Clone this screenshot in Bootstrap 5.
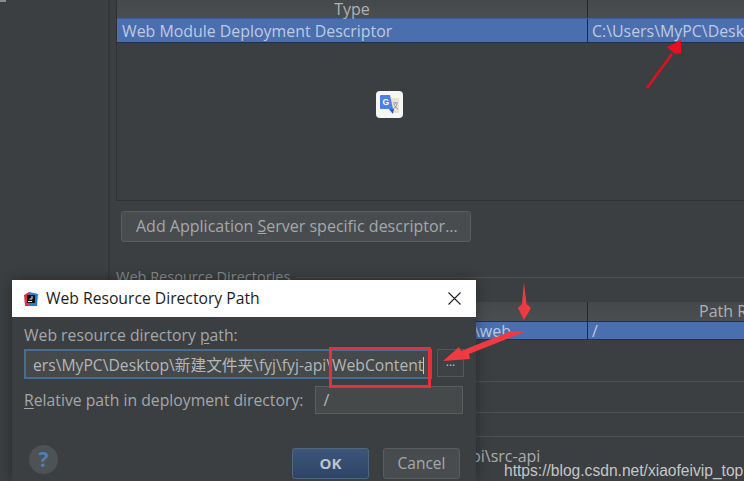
<!DOCTYPE html>
<html lang="zh"><head><meta charset="utf-8">
<link rel="stylesheet" href="https://cdn.jsdelivr.net/npm/bootstrap@5.3.0/dist/css/bootstrap.min.css">
<style>
html,body{margin:0;height:481px;overflow:hidden;background:#3c3f41}
body{font-family:"Open Sans","Noto Sans CJK SC",sans-serif;font-size:16px;color:#a9adb0;line-height:1.2}
.stage{width:744px;height:481px;overflow:hidden;background:#3c3f41}
.side{width:110px;flex:none;border-right:2px solid #35383a;background:#3c3f41}
.main{width:634px;flex:none;padding-left:6px}
.tbl-wrap{height:201px;border:1px solid #2f3133;border-top:0;border-right:0}
.thead{height:18px;background:linear-gradient(#46494b,#4b4e50);color:#aeb1b3}
.thead>div{text-align:center;line-height:18px}
.c1{width:471px;flex:none;border-right:1px solid #26282a}
.c2{flex:1;white-space:nowrap;overflow:hidden}
.trow{height:25px;background:#4b6eaf;border-top:1px solid #3e5f99;border-bottom:1px solid #1f3150;color:#bccbe2;line-height:24px;white-space:nowrap;font-size:15.900px}
.trow .c1{padding-left:5px}
.trow .c2{padding-left:4px}
.addbtn{margin:10px 0 0 5px;width:350px;height:31px;background:#494c4f;border:1px solid #5a5d5f;border-radius:3px;color:#a4a8aa;line-height:29px;padding-left:14px;white-space:nowrap}
.gtitle{margin-top:27px;height:33px;display:flex;gap:6px;font-size:14.500px;color:#85898b;line-height:15px}
.gtitle i{flex:1;border-top:1px solid #4d5052;margin-top:8px}
.thead2{height:19px;background:linear-gradient(#46494b,#4b4e50);color:#aeb1b3;line-height:19px}
.thead2 .c1,.trow2 .c1{width:472px}
.thead2 .c2{padding-left:111px}
.trow2{height:19px;background:#4b6eaf;border-top:1px solid #1f3150;border-bottom:1px solid #1f3150;color:#bccbe2;line-height:19px;white-space:nowrap}
.trow2 .c1{padding-left:358px}
.trow2 .c2{padding-left:4px}
.sep{height:1px;background:#4d5052}
.sep-a{margin-top:41px}
.sep-b{margin-top:30px}
.sep-c{margin-top:23px}
.srctext{padding-left:355px;margin-top:10px;color:#a9adb0;white-space:nowrap}

.dlg{position:absolute;left:12px;top:280px;width:464px;height:201px;background:#3c3f41;box-shadow:0 0 12px rgba(0,0,0,.35)}
.dlg-title{height:37px;background:#fff;color:#1c1c1c;font-size:15.700px;padding-left:11px}
.dlg-title .ticon{margin-right:7px}
.dlg-x{margin-left:auto;margin-right:15px}
.dlg-body{padding:9px 12px 0}
.lbl{color:#a3a7a9;font-size:15.750px;line-height:19px}
.lbl u{text-underline-offset:2px}
.path-in{width:408px;height:30px;border:2px solid #466d94;background:#45494a;color:#b3b6b8;line-height:28px;padding-left:7px;overflow:hidden;white-space:nowrap;font-size:15.700px;flex:none}
.caret-bar{display:inline-block;width:1px;height:17px;background:#c8c8c8;vertical-align:-3px}
.dots{width:27px;height:28px;border:1px solid #55585a;background:#3f4244;color:#c0c3c5;line-height:24px;text-align:center;margin-left:5px;flex:none;font-size:12px;letter-spacing:0}
.rel-row{margin-top:7px}
.rel-in{width:148px;height:28px;border:1px solid #5b5e60;background:#45494a;color:#b3b6b8;line-height:26px;padding-left:7px;margin-left:12px}
.foot{margin-top:31px;margin-left:5px}
.helpc{width:29px;height:29px;border-radius:50%;background:#4d5254;color:#4f80b5;font-weight:700;font-size:21px;line-height:29px;text-align:center}
.btns{margin-top:3px;margin-right:4px;gap:14px}
.okb,.cancelb{height:31px;width:77px;border-radius:3px;text-align:center;line-height:29px}
.okb{background:linear-gradient(#3c5579,#2d4466);border:1px solid #51677f;color:#bcc4cc;font-weight:700;font-size:15px}
.cancelb{background:#494c4f;border:1px solid #5a5d5f;color:#a4a8aa;font-size:15.500px}
.overlay{position:absolute;left:0;top:0;pointer-events:none}
.redbox{position:absolute;left:329px;top:347px;width:102px;height:41px;border:3px solid #e8303c}
.gicon{position:absolute;left:376px;top:91px;width:27px;height:27px;background:#f6f6f4;border-radius:4px}
.wm{position:absolute;left:504px;top:461px;font-family:"Liberation Sans",sans-serif;font-size:15.600px;color:#c4c6c8;white-space:nowrap;line-height:20px}
.ticon{flex:none}
</style></head><body>
<div class="stage d-flex position-relative">
  <div class="side"></div>
  <div class="main">
    <div class="tbl-wrap">
      <div class="thead d-flex"><div class="c1">Type</div><div class="c2"></div></div>
      <div class="trow d-flex"><div class="c1">Web Module Deployment Descriptor</div><div class="c2">C:\Users\MyPC\Desktop</div></div>
    </div>
    <div class="addbtn">Add Application <u>S</u>erver specific descriptor...</div>
    <div class="gtitle"><span>Web Resource Directories</span><i></i></div>
    <div class="thead2 d-flex"><div class="c1"></div><div class="c2">Path R</div></div>
    <div class="trow2 d-flex"><div class="c1">\web</div><div class="c2">/</div></div>
    <div class="sep sep-a"></div>
    <div class="sep sep-b"></div>
    <div class="sep sep-c"></div>
    <div class="srctext">pi\src-api</div>
  </div>

  <svg class="gicon" viewBox="0 0 27 27">
    <path d="M13 7h10v14a1 1 0 0 1-1 1h-8z" fill="#e8e2d6"/>
    <path d="M4 5a1 1 0 0 1 1-1h9l3 14H5a1 1 0 0 1-1-1z" fill="#4a80e8"/>
    <path d="M13 18h5l-1 5z" fill="#2e5cb8"/>
    <text x="6.500" y="14" font-family="Liberation Sans" font-size="8.500" font-weight="700" fill="#fff">G</text>
    <path d="M17 12h5M19.500 11v1M18 13c.5 2 2 4 4 5M21 13c-.5 2-2 4-4 5" stroke="#8a97a8" fill="none" stroke-width="1"/>
  </svg>

  <div class="dlg">
    <div class="dlg-title d-flex align-items-center">
      <svg width="16" height="16" viewBox="0 0 16 16" class="ticon">
        <path d="M1 4l5-3v14H2z" fill="#d9324d"/><path d="M6 1l9 2-1 12H6z" fill="#1f7fd6"/><rect x="4" y="4" width="8" height="8" fill="#111"/><rect x="5" y="10" width="4" height="1" fill="#eee"/><path d="M9 5v3H6.500" stroke="#eee" fill="none"/>
      </svg>
      <span>Web Resource Directory Path</span>
      <svg class="dlg-x" width="13" height="13" viewBox="0 0 13 13"><path d="M.5.5l12 12M12.500.5l-12 12" stroke="#222" stroke-width="1.100"/></svg>
    </div>
    <div class="dlg-body">
      <div class="lbl mb-1">Web resource directory <u>p</u>ath:</div>
      <div class="d-flex">
        <div class="path-in">ers\MyPC\Desktop\新建文件夹\fyj\fyj-api\WebContent<span class="caret-bar"></span></div>
        <div class="dots">...</div>
      </div>
      <div class="d-flex align-items-center rel-row">
        <div class="lbl"><u>R</u>elative path in deployment directory:</div>
        <div class="rel-in">/</div>
      </div>
      <div class="d-flex align-items-start justify-content-between foot">
        <div class="helpc">?</div>
        <div class="d-flex btns"><div class="okb">OK</div><div class="cancelb">Cancel</div></div>
      </div>
    </div>
  </div>

  <svg class="overlay" width="744" height="481" viewBox="0 0 744 481">
    <path d="M0 0h6v2H0z" fill="#8a8d8f"/>
    <path d="M647 88l25-34" stroke="#e01020" stroke-width="2.500" fill="none"/>
    <path d="M667 47l14-7 0 13-6 1z" fill="#e81020"/>
    <path d="M524 282l2.500 22 4.500 4-7 12-6-12 4-4z" fill="#f03a42"/>
    <path d="M527 331l-58 23 1 5-27 2 16-14 2 4 50-20z" fill="#f03a42"/>
  </svg>
  <div class="redbox"></div>
  <div class="wm">https://blog.csdn.net/xiaofeivip_top</div>
</div>
</body></html>
